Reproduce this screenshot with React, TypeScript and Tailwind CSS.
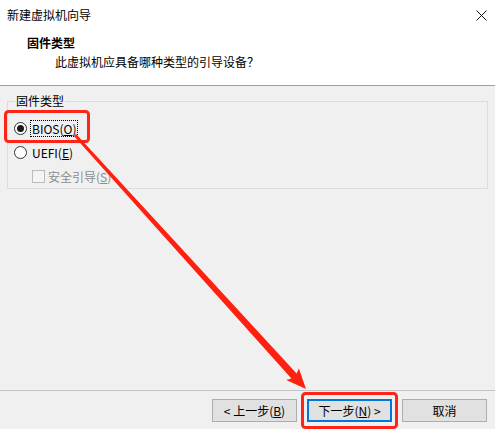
const font = { fontFamily: '"Noto Sans CJK SC", "Microsoft YaHei", sans-serif' };

function Radio({ checked }: { checked?: boolean }) {
    return (
        <span className="flex h-[13px] w-[13px] shrink-0 items-center justify-center rounded-full border border-[#333333] bg-white">
            {checked && <span className="h-[7px] w-[7px] rounded-full bg-[#1a1a1a]" />}
        </span>
    );
}

function WizardButton({ children, primary }: { children: React.ReactNode; primary?: boolean }) {
    return (
        <button
            className={
                primary
                    ? 'flex h-[23px] w-[85px] items-center justify-center border-2 border-[#0078d7] bg-[#e1e1e1] text-[12px] leading-none text-black'
                    : 'flex h-[23px] w-[85px] items-center justify-center border border-[#adadad] bg-[#e1e1e1] text-[12px] leading-none text-black'
            }
        >
            {children}
        </button>
    );
}

export default function App() {
    return (
        <div className="relative flex h-[429px] w-[495px] flex-col overflow-hidden bg-[#f0f0f0] text-black" style={font}>
            {/* header */}
            <div className="h-[86px] border-b border-[#a0a0a0] bg-white">
                <div className="flex h-[30px] items-center justify-between pl-[7px] pr-[8px]">
                    <span className="text-[12px]">新建虚拟机向导</span>
                    <svg width="11" height="11" viewBox="0 0 11 11">
                        <path d="M0.5 0.5 L10.5 10.5 M10.5 0.5 L0.5 10.5" stroke="#111" strokeWidth="1" />
                    </svg>
                </div>
                <div className="mt-[4px] pl-[27px] text-[12px] font-bold leading-[18px]">固件类型</div>
                <div className="mt-[1px] pl-[55px] text-[12px] leading-[18px]">此虚拟机应具备哪种类型的引导设备？</div>
            </div>

            {/* body */}
            <div className="flex-1 px-[7px] pt-[15px]">
                <div className="relative h-[88px] border border-[#dcdcdc] pl-[6px] pt-[14px]">
                    <span className="absolute left-[7px] top-[-10px] bg-[#f0f0f0] px-[1px] text-[12px] leading-[18px]">固件类型</span>
                    <div className="flex h-6 items-center">
                        <Radio checked />
                        <span className="ml-[3px] border border-dotted border-black px-[1px] text-[12px] leading-[15px]">
                            BIOS(<span className="underline">O</span>)
                        </span>
                    </div>
                    <div className="flex h-6 items-center">
                        <Radio />
                        <span className="ml-[5px] text-[12px] leading-[15px]">
                            UEFI(<span className="underline">E</span>)
                        </span>
                    </div>
                    <div className="flex h-6 items-center pl-[18px]">
                        <span className="h-[13px] w-[13px] border border-[#bcbcbc] bg-[#f4f4f4]" />
                        <span className="ml-[3px] text-[12px] leading-[15px] text-[#8c8c8c]">
                            安全引导(<span className="underline">S</span>)
                        </span>
                    </div>
                </div>
            </div>

            {/* footer */}
            <div className="flex h-[39px] justify-end gap-[10px] border-t border-[#c4c4c4] pr-[8px] pt-[8px]">
                <WizardButton>
                    &lt; 上一步(<span className="underline">B</span>)
                </WizardButton>
                <WizardButton primary>
                    下一步(<span className="underline">N</span>) &gt;
                </WizardButton>
                <WizardButton>取消</WizardButton>
            </div>

            {/* annotation overlay */}
            <svg className="pointer-events-none absolute inset-0 z-10" width="495" height="429" viewBox="0 0 495 429">
                <rect x="5.5" y="111.5" width="83" height="30" rx="3" fill="none" stroke="#ff2418" strokeWidth="3" />
                <rect x="302.5" y="393.5" width="94" height="34" rx="3" fill="none" stroke="#ff2418" strokeWidth="3" />
                <polygon
                    points="76.1,134 296.6,373.6 298.9,368.5 306,389 286.3,379.9 291.4,378.4 73.9,136"
                    fill="#ff2010"
                />
            </svg>
        </div>
    );
}
